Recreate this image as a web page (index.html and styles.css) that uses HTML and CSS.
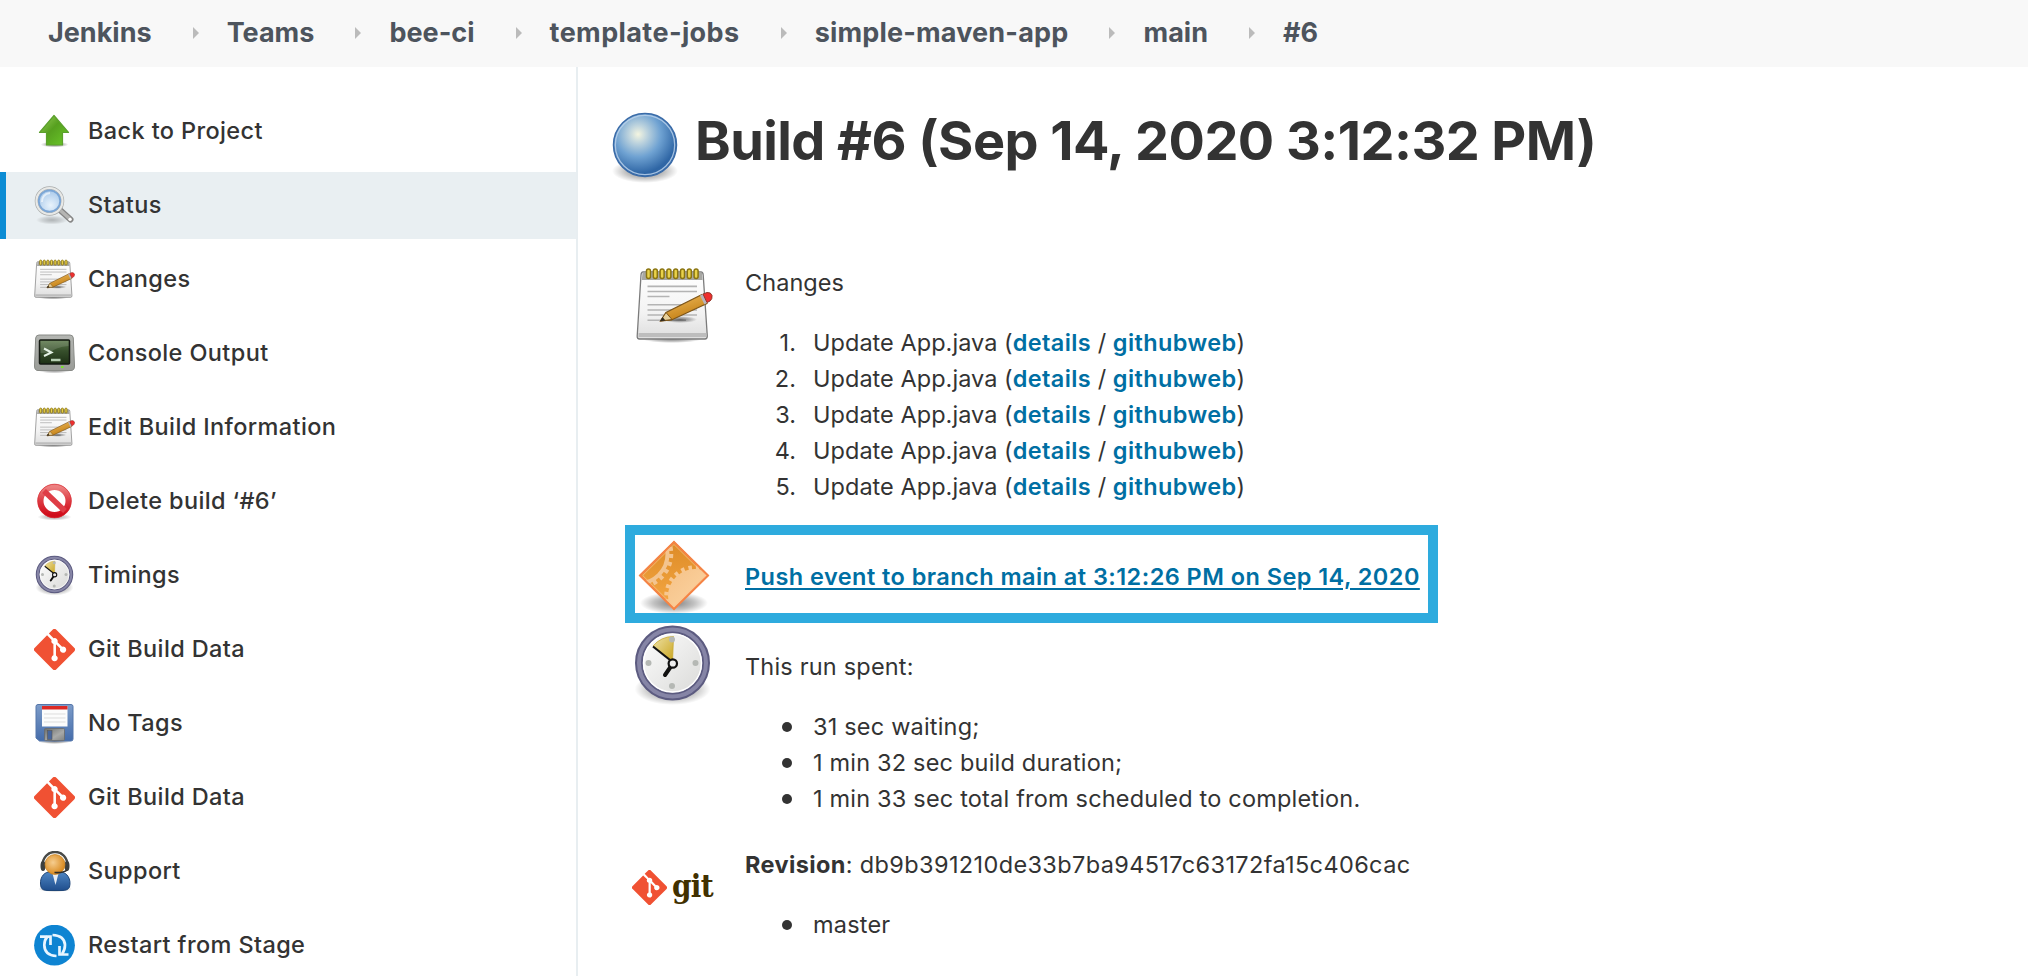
FILE: index.html
```html
<!DOCTYPE html>
<html lang="en">
<head>
<meta charset="utf-8">
<title>Build #6</title>
<link rel="stylesheet" href="styles.css">
</head>
<body>
<svg class="defs" aria-hidden="true">
  <defs>
    <linearGradient id="paper" x1="0" y1="0" x2="0" y2="1"><stop offset="0" stop-color="#fff"/><stop offset=".6" stop-color="#f3f3f3"/><stop offset="1" stop-color="#ddd"/></linearGradient>
    <linearGradient id="wood" x1="0" y1="0" x2=".5" y2="1"><stop offset="0" stop-color="#f3bf62"/><stop offset="1" stop-color="#c17d11"/></linearGradient>
    <linearGradient id="green" x1="0" y1="0" x2="1" y2="1"><stop offset="0" stop-color="#9bd05a"/><stop offset=".45" stop-color="#56a01f"/><stop offset="1" stop-color="#6cc92a"/></linearGradient>
    <radialGradient id="lens" cx=".55" cy=".7" r=".7"><stop offset="0" stop-color="#e9f3fc"/><stop offset="1" stop-color="#a9c9ea"/></radialGradient>
    <radialGradient id="ball" cx=".39" cy=".33" r=".62"><stop offset="0" stop-color="#f4f5e0"/><stop offset=".22" stop-color="#c0d5de"/><stop offset=".58" stop-color="#6fa2d2"/><stop offset="1" stop-color="#2f66a5"/></radialGradient>
    <radialGradient id="shade"><stop offset="0" stop-color="#000" stop-opacity=".5"/><stop offset=".6" stop-color="#000" stop-opacity=".24"/><stop offset="1" stop-color="#000" stop-opacity="0"/></radialGradient>
    <linearGradient id="screen" x1="0" y1="0" x2="0" y2="1"><stop offset="0" stop-color="#5d7a4c"/><stop offset=".45" stop-color="#37502c"/><stop offset="1" stop-color="#1d3015"/></linearGradient>
    <linearGradient id="metal" x1="0" y1="0" x2="0" y2="1"><stop offset="0" stop-color="#b4b6b2"/><stop offset="1" stop-color="#9a9c98"/></linearGradient>
    <linearGradient id="red" x1="0" y1="0" x2="0" y2="1"><stop offset="0" stop-color="#ec8080"/><stop offset=".5" stop-color="#dd3a42"/><stop offset="1" stop-color="#d00c1a"/></linearGradient>
    <linearGradient id="face" x1="0" y1="0" x2="1" y2="1"><stop offset="0" stop-color="#fff"/><stop offset="1" stop-color="#d8d8d6"/></linearGradient>
    <linearGradient id="floppy" x1="0" y1="0" x2="0" y2="1"><stop offset="0" stop-color="#7d9cc9"/><stop offset="1" stop-color="#446caa"/></linearGradient>
    <linearGradient id="shutter" x1="0" y1="0" x2="1" y2="1"><stop offset="0" stop-color="#6b6e6c"/><stop offset=".6" stop-color="#a9aaa8"/><stop offset="1" stop-color="#808280"/></linearGradient>
    <radialGradient id="skin" cx=".4" cy=".4" r=".6"><stop offset="0" stop-color="#f6cd8f"/><stop offset="1" stop-color="#d98a1f"/></radialGradient>
    <linearGradient id="suit" x1="0" y1="0" x2="0" y2="1"><stop offset="0" stop-color="#4f86c3"/><stop offset="1" stop-color="#1f4e8d"/></linearGradient>
    <linearGradient id="orange" x1="0" y1="0" x2="0" y2="1"><stop offset="0" stop-color="#dc8a26"/><stop offset="1" stop-color="#f7aa45"/></linearGradient>
    <linearGradient id="gear" x1="0" y1="0" x2="1" y2="1"><stop offset="0" stop-color="#f5c288"/><stop offset="1" stop-color="#ffdcae"/></linearGradient>
    <linearGradient id="gold" x1="0" y1="0" x2="1" y2="1"><stop offset="0" stop-color="#eee2a8"/><stop offset="1" stop-color="#c9a41c"/></linearGradient>

    <symbol id="i-notepad" viewBox="0 0 77 77">
      <ellipse cx="36" cy="72" rx="30" ry="4" fill="url(#shade)"/>
      <path d="M7 5H65Q67 5 67.200 8L71.300 69Q71.300 72 69 72H3.500Q1 72 1.200 69L5 8Q5.200 5 7 5Z" fill="url(#paper)" stroke="#7b7b7b" stroke-width="1.300"/>
      <path d="M6.500 5.500H66L66.600 13H5.800Z" fill="#a7a7a3"/>
      <path d="M2.500 66H70.200L70 70H2.500Z" fill="#bdbdbd"/>
      <g stroke="#b4b4b4" stroke-width="1.600"><path d="M11.500 19.400H61M11.500 24.500H61M11.500 29.500H33.500M11.500 37.800H61M11.500 43H61M11.500 48H61M11.500 53.200H50"/></g>
      <g fill="#e9d24a" stroke="#8a7410" stroke-width="1.500"><rect x="10.500" y="2" width="4" height="9.500" rx="2"/><rect x="17.300" y="2" width="4" height="9.500" rx="2"/><rect x="24.100" y="2" width="4" height="9.500" rx="2"/><rect x="30.900" y="2" width="4" height="9.500" rx="2"/><rect x="37.700" y="2" width="4" height="9.500" rx="2"/><rect x="44.500" y="2" width="4" height="9.500" rx="2"/><rect x="51.300" y="2" width="4" height="9.500" rx="2"/><rect x="58.100" y="2" width="4" height="9.500" rx="2"/></g>
      <ellipse cx="44" cy="52.500" rx="17" ry="3.500" fill="url(#shade)"/>
      <path d="M24.500 54L30 45.500L66 27.500L71 36.500L35.500 53Z" fill="url(#wood)" stroke="#7c5418" stroke-width="1.200"/>
      <path d="M24.500 54L30 45.500L36 52.500Z" fill="#e6cf9a" stroke="#7c5418"/>
      <path d="M24 54.200L26.500 50L29.500 53.400Z" fill="#2f2a20"/>
      <path d="M64 28.500L67 27L71.300 35.500L68.500 37.500Z" fill="#b7b5bd"/>
      <path d="M67 27L71 25.500Q75 25 76 28.500Q76.500 32 74 34L71 35.500Z" fill="#ef2f2f" stroke="#92362a"/>
    </symbol>

    <symbol id="i-clock" viewBox="0 0 77 82">
      <ellipse cx="38.500" cy="65" rx="38" ry="16" fill="url(#shade)"/>
      <circle cx="38.500" cy="39" r="33.500" fill="url(#face)" stroke="#5c5b80" stroke-width="8"/>
      <circle cx="38.500" cy="39" r="33.500" fill="none" stroke="#8685a6" stroke-width="4"/>
      <circle cx="38.500" cy="39" r="29" fill="none" stroke="#fff" stroke-width="1.500"/>
      <path d="M38.500 38L19 22Q27 12.500 39.500 12.500Z" fill="url(#gold)" stroke="#c8a830" stroke-width=".8"/>
      <g fill="#b5b8b4"><circle cx="38" cy="15.500" r="3"/><circle cx="14.500" cy="39" r="3"/><circle cx="61.500" cy="39" r="3"/><circle cx="38" cy="62" r="3"/></g>
      <path d="M19 22.500L36 36" stroke="#111" stroke-width="2.200"/><path d="M36.500 43L31 51" stroke="#111" stroke-width="4" stroke-linecap="round"/>
      <circle cx="38.800" cy="39.500" r="4.200" fill="#eee" stroke="#111" stroke-width="2.200"/>
    </symbol>

    <symbol id="i-git" viewBox="0 0 92 92">
      <path fill="#f05133" d="M90.200 41.900 50.100 1.800a5.900 5.900 0 0 0-8.400 0l-8.300 8.300 10.500 10.600a7 7 0 0 1 8.900 8.900l10.200 10.200a7 7 0 1 1-4.200 4l-9.500-9.500v25a7 7 0 1 1-5.800-.2V33.800a7 7 0 0 1-3.800-9.200L29.300 14.300 1.800 41.800a5.900 5.900 0 0 0 0 8.400l40.100 40.100a5.900 5.900 0 0 0 8.400 0l39.900-40a5.900 5.900 0 0 0 0-8.400Z"/>
    </symbol>
  </defs>
</svg>

<nav class="crumbs">
  <a>Jenkins</a><i></i><a>Teams</a><i></i><a>bee-ci</a><i></i><a class="wide">template-jobs</a><i></i><a class="semiwide">simple-maven-app</a><i></i><a>main</a><i></i><a>#6</a>
</nav>

<div class="page">
  <aside class="side">
    <a class="task"><svg viewBox="0 0 41 41"><ellipse cx="20.500" cy="33.500" rx="14" ry="3" fill="url(#shade)"/><path d="M20 4.500L34.500 21.500H28.500V34H12.500V21.500H5.500Z" fill="url(#green)" stroke="#5ba02c" stroke-width="1.200" stroke-linejoin="round"/></svg>Back to Project</a>
    <a class="task active"><svg viewBox="0 0 41 41"><ellipse cx="18" cy="35" rx="16" ry="4.500" fill="url(#shade)" opacity=".5"/><path d="M26 25L36.500 34.500" stroke="#858585" stroke-width="6" stroke-linecap="round"/><path d="M26 25L36.300 34.300" stroke="#b5b5b3" stroke-width="3.500" stroke-linecap="round"/><circle cx="36" cy="34.300" r="1.600" fill="#fff"/><circle cx="15.500" cy="16" r="13" fill="none" stroke="#a9abaa" stroke-width="3.500"/><circle cx="15.500" cy="16" r="13" fill="none" stroke="#e8e9e7" stroke-width="2.200"/><circle cx="15.500" cy="16" r="10.700" fill="url(#lens)" stroke="#7ba6d6" stroke-width="1.800"/><path d="M8 17Q8 9 16 8" fill="none" stroke="#fff" stroke-width="2" opacity=".6"/></svg>Status</a>
    <a class="task"><svg><use href="#i-notepad"/></svg>Changes</a>
    <a class="task"><svg viewBox="0 0 41 41"><ellipse cx="20.500" cy="37" rx="17" ry="3.500" fill="url(#shade)"/><path d="M5 2H36Q39 2 39.300 5L40.500 33Q40.500 37.500 37 37.500H4Q.5 37.500 .5 33L1.700 5Q2 2 5 2Z" fill="url(#metal)" stroke="#888a86"/><rect x="5.500" y="7" width="30" height="24" rx="1" fill="url(#screen)" stroke="#151a13" stroke-width="1.500"/><path d="M6.500 8H34.500V13Q22 14 15 20H6.500Z" fill="#fff" opacity=".14"/><path d="M10 15.500L17.500 19.500L10 23" fill="none" stroke="#e4f2e4" stroke-width="2"/><path d="M17 27H26.500" stroke="#b6cfb2" stroke-width="2.500"/><rect x="27" y="33" width="2.500" height="2" fill="#77e12d"/></svg>Console Output</a>
    <a class="task"><svg><use href="#i-notepad"/></svg>Edit Build Information</a>
    <a class="task"><svg viewBox="0 0 41 41"><ellipse cx="20.500" cy="36" rx="17" ry="3.500" fill="url(#shade)" opacity=".7"/><circle cx="20.500" cy="20" r="14" fill="#fff" stroke="url(#red)" stroke-width="6"/><path d="M10 10L31 30" stroke="#df3d46" stroke-width="5.500"/><circle cx="20.500" cy="20" r="16.800" fill="none" stroke="#d92c34" stroke-width=".7"/></svg>Delete build ‘#6’</a>
    <a class="task"><svg><use href="#i-clock"/></svg>Timings</a>
    <a class="task"><svg><use href="#i-git"/></svg>Git Build Data</a>
    <a class="task"><svg viewBox="0 0 41 41"><ellipse cx="20.500" cy="38.500" rx="16" ry="2.500" fill="url(#shade)"/><path d="M4 1.500H37Q39 1.500 39 3.500V36Q39 38 37 38H5.500L2 35V3.500Q2 1.500 4 1.500Z" fill="url(#floppy)" stroke="#5576aa"/><rect x="8" y="3" width="25.500" height="20.500" fill="#fcfcfc"/><rect x="8" y="3" width="25.500" height="3.500" fill="#dc2a25"/><path d="M10 11H31.500M10 15H31.500M10 19H31.500" stroke="#ddd"/><rect x="10.500" y="25.500" width="20" height="12" rx="1" fill="url(#shutter)" stroke="#686b6c" stroke-width=".8"/><rect x="13.500" y="27.500" width="4.500" height="9" fill="#48669b" stroke="#555" stroke-width=".6"/></svg>No Tags</a>
    <a class="task"><svg><use href="#i-git"/></svg>Git Build Data</a>
    <a class="task"><svg viewBox="0 0 41 41"><ellipse cx="21" cy="38" rx="17" ry="3" fill="url(#shade)"/><path d="M8.500 16C7.500 -4 34.500 -4 33.500 16" fill="none" stroke="#484a48" stroke-width="2.500"/><path d="M7 36C5 28 9 21.500 15 21H27C33 21.500 37.500 28 35.500 36Q34 39.500 28 39.500H14Q8 39.500 7 36Z" fill="url(#suit)" stroke="#1f4678"/><path d="M18.500 22.500H24.500L21.500 34Z" fill="#e8eef5"/><ellipse cx="9" cy="15" rx="2.500" ry="5" fill="#3d403f"/><ellipse cx="33" cy="15" rx="2.500" ry="5" fill="#3d403f"/><circle cx="21" cy="13.500" r="10" fill="url(#skin)" stroke="#c27d1d" stroke-width=".7"/><path d="M33 19Q30 22 20.500 21.500" fill="none" stroke="#302d29" stroke-width="1.700"/></svg>Support</a>
    <a class="task"><svg viewBox="0 0 41 41"><circle cx="20.500" cy="20.200" r="20.400" fill="#0e84d2"/><g fill="none" stroke="#e8f5ff" stroke-width="2.700"><path d="M22.500 31Q10.500 30.500 10.300 20Q10.300 15 13.500 11.500"/><path d="M6 11.700H16.500V20"/><path d="M18.500 10Q30.500 10.500 31 20Q31 25 28 29"/><path d="M34.500 29.500H25.500V21"/></g></svg>Restart from Stage</a>
  </aside>

  <main class="main">
    <h1><svg viewBox="0 0 66 72"><ellipse cx="33" cy="59" rx="33" ry="12" fill="url(#shade)"/><circle cx="33" cy="33" r="31.500" fill="url(#ball)" stroke="#3a6ba8" stroke-width="1.500"/><circle cx="33" cy="33" r="29.700" fill="none" stroke="#b8d0ea" stroke-width="1.300" opacity=".85"/></svg><span>Build #6 (Sep 14, 2020 3:12:32 PM)</span></h1>

    <section class="row changes">
      <svg class="big"><use href="#i-notepad"/></svg>
      <div class="body">
        <p>Changes</p>
        <ol>
          <li>Update App.java (<a>details</a> / <a>githubweb</a>)</li>
          <li>Update App.java (<a>details</a> / <a>githubweb</a>)</li>
          <li>Update App.java (<a>details</a> / <a>githubweb</a>)</li>
          <li>Update App.java (<a>details</a> / <a>githubweb</a>)</li>
          <li>Update App.java (<a>details</a> / <a>githubweb</a>)</li>
        </ol>
      </div>
    </section>

    <section class="row cause">
      <svg class="cause-icon" viewBox="0 0 72 76"><ellipse cx="36" cy="63" rx="34" ry="11" fill="url(#shade)"/><clipPath id="dia"><path d="M36 1L71 35.500L36 70L1 35.500Z"/></clipPath><g clip-path="url(#dia)"><rect width="72" height="72" fill="url(#orange)"/><circle cx="0" cy="14" r="29.500" fill="none" stroke="#f3c48f" stroke-width="4"/><circle cx="0" cy="14" r="33" fill="none" stroke="#f3c48f" stroke-width="4.500" stroke-dasharray="4 4"/><circle cx="57" cy="56" r="27" fill="url(#gear)"/><circle cx="57" cy="56" r="28.500" fill="none" stroke="#f7c791" stroke-width="4.500" stroke-dasharray="3.500 4"/></g><path d="M36 2L70 35.500L36 69L2 35.500Z" fill="none" stroke="#f58345" stroke-width="2"/><path d="M36 4.500L67.300 35.500L36 66.500L4.700 35.500Z" fill="none" stroke="#fbc48f" stroke-width="1" opacity=".7"/></svg>
      <a>Push event to branch main at 3:12:26 PM on Sep 14, 2020</a>
    </section>

    <section class="row timing">
      <svg class="clock"><use href="#i-clock"/></svg>
      <div class="body">
        <p>This run spent:</p>
        <ul>
          <li>31 sec waiting;</li>
          <li>1 min 32 sec build duration;</li>
          <li>1 min 33 sec total from scheduled to completion.</li>
        </ul>
      </div>
    </section>

    <section class="row revision">
      <div class="gitlogo"><svg><use href="#i-git"/></svg><span>git</span></div>
      <div class="body">
        <p class="rev"><b>Revision</b>: db9b391210de33b7ba94517c63172fa15c406cac</p>
        <ul><li>master</li></ul>
      </div>
    </section>
  </main>
</div>
</body>
</html>
```
FILE: styles.css
```css
* { box-sizing: border-box; margin: 0; padding: 0; }
body {
  width: 2028px;
  height: 976px;
  overflow: hidden;
  background: #fff;
  color: #333;
  font: 400 23.5px/36px Inter, "Liberation Sans", sans-serif;
  letter-spacing: .19px;
}
.defs { position: absolute; width: 0; height: 0; }

.crumbs {
  display: flex;
  align-items: center;
  height: 67px;
  padding: 0 0 2px 48px;
  background: #f8f8f8;
  color: #4d545d;
  font-size: 27px;
  font-weight: 700;
  letter-spacing: 0;
}
.crumbs .wide { letter-spacing: .4px; }
.crumbs .semiwide { letter-spacing: .18px; }
.crumbs i {
  margin: 1px 28.100px 0 41px;
  border-left: 6px solid #bbb;
  border-top: 6px solid transparent;
  border-bottom: 6px solid transparent;
}

.page { display: flex; height: 909px; }
.side {
  width: 578px;
  flex: none;
  padding-top: 31px;
  border-right: 2px solid #e8eef1;
  display: flex;
  flex-direction: column;
  gap: 7px;
}
.task {
  flex: none;
  display: flex;
  align-items: center;
  height: 67px;
  padding-left: 34px;
  padding-bottom: 1px;
  font-weight: 500;
  letter-spacing: .38px;
}
.task svg { width: 41px; height: 41px; margin-right: 13px; flex: none; }
.task.active {
  background: #e9eff2;
  padding-left: 28px;
  border-left: 6px solid #0c8cd4;
}

.main { flex: 1; }
h1 {
  display: flex;
  align-items: flex-start;
  height: 198px;
  padding: 44px 0 0 34px;
  font-size: 54px;
  font-weight: 700;
  line-height: 60px;
  letter-spacing: -.56px;
}
h1 svg { width: 66px; height: 72px; margin: 1px 17px 0 0; flex: none; }
.row { display: flex; align-items: flex-start; padding-left: 58px; }
.big { width: 77px; height: 77px; margin: 2px 32px 0 0; flex: none; }
ol, ul { list-style: none; margin-top: 24px; }
ol { counter-reset: n; }
li { display: flex; white-space: pre; }
li::before { flex: none; }
.changes { height: 260px; letter-spacing: .04px; }
ol a { letter-spacing: .38px; }
ol li::before {
  counter-increment: n;
  content: counter(n) ".";
  width: 51px;
  margin-right: 17px;
  text-align: right;
}
ul li::before {
  content: "";
  width: 10px;
  height: 10px;
  margin: 13px 21px 0 37px;
  border-radius: 50%;
  background: #333;
}
.main a { color: #006fa3; font-weight: 600; }

.cause {
  width: 813px;
  height: 98px;
  margin-left: 47px;
  padding: 5px 0 0 3px;
  border: 10px solid #2eabde;
}
.cause-icon { width: 72px; height: 76px; margin-right: 35px; flex: none; }
.cause a {
  padding-top: 19px;
  letter-spacing: .45px;
  text-decoration: underline;
  text-decoration-thickness: 2px;
  text-underline-offset: 3px;
  white-space: nowrap;
}
.timing { height: 224px; }
.timing .body { padding-top: 26px; }
.clock { width: 77px; height: 82px; margin: 1px 34px 0 -2px; flex: none; }
.rev { letter-spacing: .37px; }
.gitlogo {
  display: flex;
  width: 113px;
  margin-left: -4px;
  padding-top: 23px;
  flex: none;
}
.gitlogo svg { width: 35px; height: 35px; margin-right: 5px; flex: none; }
.gitlogo span {
  padding-top: 1px;
  font: 700 31px/30px "DejaVu Serif", serif;
  font-stretch: condensed;
  color: #413000;
  letter-spacing: -.7px;
}
```
